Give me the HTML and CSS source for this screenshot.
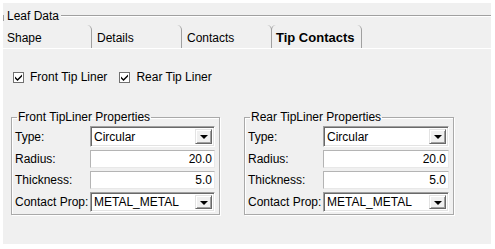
FILE: index.html
```html
<!DOCTYPE html>
<html>
<head>
<meta charset="utf-8">
<link rel="stylesheet" href="styles.css">
</head>
<body>
<div class="panel">
  <div class="leaf-head">
    <span class="leaf-tick"></span>
    <span class="leaf-title">Leaf Data</span>
    <span class="leaf-line"></span>
  </div>
  <div class="tabs">
    <div class="tab">Shape</div>
    <div class="tab">Details</div>
    <div class="tab">Contacts</div>
    <div class="tab tab-active">Tip Contacts</div>
  </div>
  <div class="content">
    <div class="checks">
      <label class="check"><span class="box"><svg width="9" height="9" viewBox="0 0 9 9"><path d="M1 3.5 L3.5 6 L8 1.5 L8 3.5 L3.5 8 L1 5.5 Z" fill="#000"/></svg></span>Front Tip Liner</label>
      <label class="check"><span class="box"><svg width="9" height="9" viewBox="0 0 9 9"><path d="M1 3.5 L3.5 6 L8 1.5 L8 3.5 L3.5 8 L1 5.5 Z" fill="#000"/></svg></span>Rear Tip Liner</label>
    </div>
    <div class="groups">
      <fieldset class="group">
        <legend>Front TipLiner Properties</legend>
        <div class="grid">
          <span class="lbl">Type:</span>
          <div class="combo combo-type"><span class="combo-text">Circular</span><span class="btn"><span class="tri"></span></span></div>
          <span class="lbl">Radius:</span>
          <div class="field">20.0</div>
          <span class="lbl">Thickness:</span>
          <div class="field">5.0</div>
          <span class="lbl">Contact Prop:</span>
          <div class="combo combo-prop"><span class="combo-text">METAL_METAL</span><span class="btn"><span class="tri"></span></span></div>
        </div>
      </fieldset>
      <fieldset class="group">
        <legend>Rear TipLiner Properties</legend>
        <div class="grid">
          <span class="lbl">Type:</span>
          <div class="combo combo-type"><span class="combo-text">Circular</span><span class="btn"><span class="tri"></span></span></div>
          <span class="lbl">Radius:</span>
          <div class="field">20.0</div>
          <span class="lbl">Thickness:</span>
          <div class="field">5.0</div>
          <span class="lbl">Contact Prop:</span>
          <div class="combo combo-prop"><span class="combo-text">METAL_METAL</span><span class="btn"><span class="tri"></span></span></div>
        </div>
      </fieldset>
    </div>
  </div>
</div>
</body>
</html>
```

FILE: styles.css
```css
html, body {
  margin: 0;
  padding: 0;
  background: #ffffff;
}
body {
  font-family: "Liberation Sans", Arial, sans-serif;
  font-size: 12px;
  color: #000;
}
.panel {
  margin: 3px;
  width: 488px;
  height: 241px;
  background: #f0f0f0;
  display: flex;
  flex-direction: column;
}
.leaf-head {
  display: flex;
  align-items: flex-start;
  height: 14px;
  margin-top: 6px;
}
.leaf-tick {
  width: 1px;
  height: 6px;
  margin-top: 6px;
  background: #a0a0a0;
}
.leaf-title {
  line-height: 14px;
  padding: 0 2px 0 3px;
}
.leaf-line {
  flex: 1;
  height: 1px;
  margin-top: 6px;
  background: #a0a0a0;
  border-bottom: 1px solid #ffffff;
}
.tabs {
  display: flex;
  height: 23px;
  margin-top: 2px;
  border-bottom: 1px solid #ffffff;
}
.tab {
  box-sizing: border-box;
  width: 90px;
  height: 23px;
  padding: 6px 0 0 5px;
  line-height: 14px;
  border-right: 1px solid #a0a0a0;
  border-top-right-radius: 5px;
  margin-top: 0;
}
.tab:first-child {
  width: 89px;
  padding-left: 4px;
}
.tab-active {
  font-weight: bold;
  font-size: 13px;
  padding-left: 4px;
  border-left: 1px solid #a0a0a0;
  border-top-left-radius: 5px;
  margin-left: -1px;
  width: 91px;
}
.content {
  padding-left: 8px;
  display: flex;
  flex-direction: column;
}
.checks {
  display: flex;
  margin-top: 21px;
  height: 14px;
  align-items: center;
  gap: 12px;
  padding-left: 2px;
}
.check {
  display: flex;
  align-items: center;
  line-height: 14px;
}
.box {
  box-sizing: border-box;
  width: 11px;
  height: 11px;
  border: 1px solid #707070;
  background: #ffffff;
  margin-right: 6px;
  display: flex;
  align-items: center;
  justify-content: center;
}
.box svg {
  display: block;
}
.groups {
  display: flex;
  gap: 24px;
  margin-top: 27px;
}
.group {
  box-sizing: border-box;
  margin: 0;
  width: 209px;
  padding: 3px 4px 2px 3px;
  border: 1px solid #a9a9a9;
  box-shadow: inset 1px 1px 0 #ffffff, 1px 1px 0 #ffffff;
  min-width: 0;
}
.group + .group {
  width: 210px;
}
.group legend {
  padding: 0 1px;
  margin-left: 2px;
  line-height: 12px;
}
.grid {
  display: grid;
  grid-template-columns: 75px 1fr;
  grid-template-rows: 21px 18px 18px 20px;
  row-gap: 3px;
  align-items: center;
}
.lbl {
  line-height: 14px;
  white-space: nowrap;
}
.combo {
  box-sizing: border-box;
  height: 100%;
  background: #ffffff;
  border-top: 1px solid #a0a0a0;
  border-left: 1px solid #a0a0a0;
  border-bottom: 1px solid #ffffff;
  border-right: 1px solid #ffffff;
  box-shadow: inset 1px 1px 0 #696969, inset -1px -1px 0 #e3e3e3;
  display: flex;
  align-items: center;
  padding: 0 2px 0 3px;
}
.combo-text {
  flex: 1;
  line-height: 14px;
}
.btn {
  box-sizing: border-box;
  width: 17px;
  height: calc(100% - 4px);
  background: #f0f0f0;
  border-top: 1px solid #e3e3e3;
  border-left: 1px solid #e3e3e3;
  border-right: 1px solid #696969;
  border-bottom: 1px solid #696969;
  box-shadow: inset 1px 1px 0 #ffffff, inset -1px -1px 0 #a0a0a0;
  display: flex;
  align-items: center;
  justify-content: center;
}
.tri {
  width: 0;
  height: 0;
  border-left: 4px solid transparent;
  border-right: 4px solid transparent;
  border-top: 4px solid #000000;
  margin-top: 1px;
}
.field {
  box-sizing: border-box;
  height: 100%;
  background: #ffffff;
  border: 1px solid #b4b4b4;
  border-right-color: #e8e8e8;
  border-bottom-color: #e8e8e8;
  text-align: right;
  padding: 0 2px;
  line-height: 16px;
}
```
